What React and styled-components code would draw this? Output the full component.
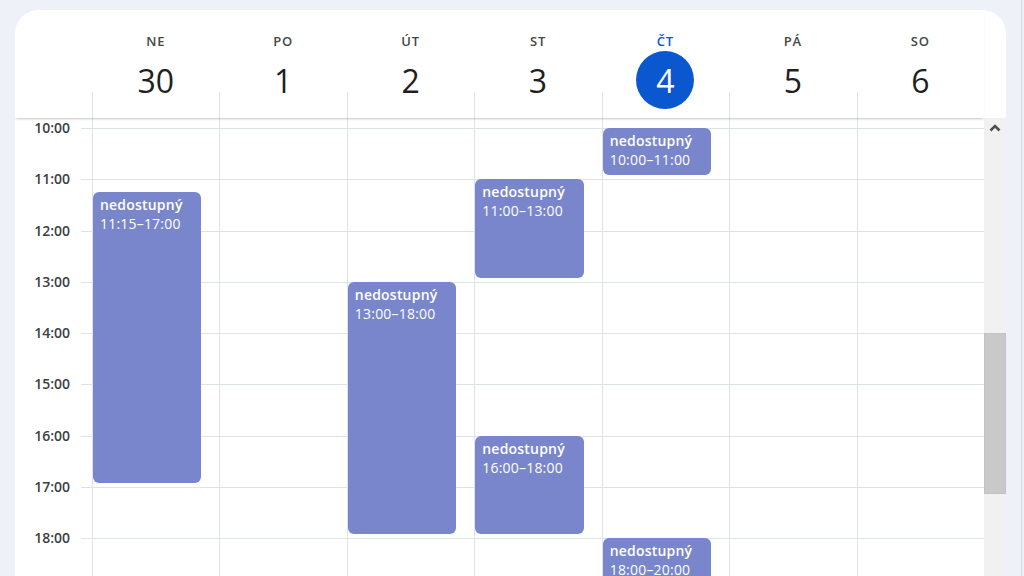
import React from "react";
import styled, { createGlobalStyle } from "styled-components";

const HOUR = 51.25;
const START = 10;
const TOP_PAD = 10;
const LINE = "#dde3ea";

const Global = createGlobalStyle`
  *, *::before, *::after { box-sizing: border-box; }
  html, body { margin: 0; padding: 0; }
  body {
    background: #eef2f8;
    font-family: "Open Sans", "Noto Sans", sans-serif;
    overflow: hidden;
  }
`;

const Page = styled.div`
  width: 1022px;
  height: 576px;
  padding: 10px 15px 0 15px;
  border-right: 1px solid #d6dae0;
  overflow: hidden;
`;

const Card = styled.div`
  height: 100%;
  background: #ffffff;
  border-radius: 24px 24px 0 0;
  display: flex;
  flex-direction: column;
  overflow: hidden;
`;

const Header = styled.div`
  display: grid;
  grid-template-columns: 77px repeat(7, 1fr);
  height: 108px;
  margin-right: 22px;
  position: relative;
  z-index: 2;
  box-shadow: 0 2px 2px -1px rgba(60, 64, 67, 0.3);
  background: #fff;
`;

const DayHead = styled.div`
  display: flex;
  flex-direction: column;
  align-items: center;
  padding-top: 23px;
  background: linear-gradient(${LINE}, ${LINE}) left bottom / 1px 26px no-repeat;
`;

const DayName = styled.div`
  font-size: 13px;
  line-height: 16px;
  font-weight: 600;
  letter-spacing: 0.8px;
  color: ${(p) => (p.$today ? "#0b57d0" : "#444746")};
`;

const DayNum = styled.div`
  margin-top: 2px;
  width: 58px;
  height: 58px;
  border-radius: 50%;
  display: flex;
  align-items: center;
  justify-content: center;
  font-size: 32px;
  font-weight: 400;
  color: ${(p) => (p.$today ? "#ffffff" : "#1f1f1f")};
  background: ${(p) => (p.$today ? "#0b57d0" : "transparent")};
`;

const Body = styled.div`
  flex: 1;
  min-height: 0;
  display: flex;
  overflow: hidden;
`;

const Gutter = styled.div`
  width: 77px;
  flex: none;
  padding-top: ${TOP_PAD}px;
`;

const TimeRow = styled.div`
  height: ${HOUR}px;
  display: flex;
  justify-content: flex-end;
  align-items: flex-start;
`;

const TimeLabel = styled.div`
  margin-top: -10px;
  height: 20px;
  line-height: 20px;
  padding-right: 11px;
  font-size: 14px;
  font-weight: 600;
  color: #3c4043;
`;

const Tick = styled.div`
  width: 11px;
  border-top: 1px solid ${LINE};
`;

const Days = styled.div`
  flex: 1;
  display: grid;
  grid-template-columns: repeat(7, 1fr);
`;

const DayColumn = styled.div`
  position: relative;
  border-left: 1px solid ${LINE};
  padding-top: ${TOP_PAD}px;
`;

const Slot = styled.div`
  height: ${HOUR}px;
  border-top: 1px solid ${LINE};
`;

const Event = styled.div`
  position: absolute;
  left: 0;
  width: calc(100% - 18px);
  background: #7986cb;
  border-radius: 6px;
  padding: 3px 7px 0 7px;
  color: #ffffff;
  font-size: 14px;
  line-height: 19px;
  overflow: hidden;
`;

const EventTitle = styled.div`
  font-weight: 600;
  letter-spacing: 0.2px;
`;

const EventTime = styled.div`
  font-weight: 500;
  letter-spacing: 0.2px;
`;

const Scrollbar = styled.div`
  width: 22px;
  flex: none;
  background: #f1f1f1;
  display: flex;
  flex-direction: column;
  align-items: stretch;
`;

const ScrollArrow = styled.div`
  height: 20px;
  display: flex;
  align-items: center;
  justify-content: center;
`;

const Thumb = styled.div`
  margin-top: 195px;
  height: 161px;
  background: #c9c9c9;
  border: 1px solid #c2c2c2;
`;

const days = [
  { name: "NE", num: 30 },
  { name: "PO", num: 1 },
  { name: "ÚT", num: 2 },
  { name: "ST", num: 3 },
  { name: "ČT", num: 4, today: true },
  { name: "PÁ", num: 5 },
  { name: "SO", num: 6 },
];

const events = {
  0: [{ start: 11.25, end: 17, label: "11:15–17:00" }],
  2: [{ start: 13, end: 18, label: "13:00–18:00" }],
  3: [
    { start: 11, end: 13, label: "11:00–13:00" },
    { start: 16, end: 18, label: "16:00–18:00" },
  ],
  4: [
    { start: 10, end: 11, label: "10:00–11:00" },
    { start: 18, end: 20, label: "18:00–20:00" },
  ],
};

const labelHours = Array.from({ length: 9 }, (_, i) => START + i);
const slotHours = Array.from({ length: 10 }, (_, i) => START + i);

export default function App() {
  return (
    <>
      <Global />
      <Page>
        <Card>
          <Header>
            <div />
            {days.map((d) => (
              <DayHead key={d.name}>
                <DayName $today={d.today}>{d.name}</DayName>
                <DayNum $today={d.today}>{d.num}</DayNum>
              </DayHead>
            ))}
          </Header>
          <Body>
            <Gutter>
              {labelHours.map((h) => (
                <TimeRow key={h}>
                  <TimeLabel>{h}:00</TimeLabel>
                  <Tick />
                </TimeRow>
              ))}
              <TimeRow>
                <Tick />
              </TimeRow>
            </Gutter>
            <Days>
              {days.map((d, i) => (
                <DayColumn key={d.name}>
                  {slotHours.map((h) => (
                    <Slot key={h} />
                  ))}
                  {(events[i] || []).map((e) => (
                    <Event
                      key={e.label}
                      style={{
                        top: TOP_PAD + (e.start - START) * HOUR,
                        height: (e.end - e.start) * HOUR - 4,
                      }}
                    >
                      <EventTitle>nedostupný</EventTitle>
                      <EventTime>{e.label}</EventTime>
                    </Event>
                  ))}
                </DayColumn>
              ))}
            </Days>
            <Scrollbar>
              <ScrollArrow>
                <svg width="12" height="8" viewBox="0 0 12 8">
                  <polyline
                    points="1.5,6.5 6,2 10.5,6.5"
                    fill="none"
                    stroke="#505050"
                    strokeWidth="2.6"
                  />
                </svg>
              </ScrollArrow>
              <Thumb />
            </Scrollbar>
          </Body>
        </Card>
      </Page>
    </>
  );
}
